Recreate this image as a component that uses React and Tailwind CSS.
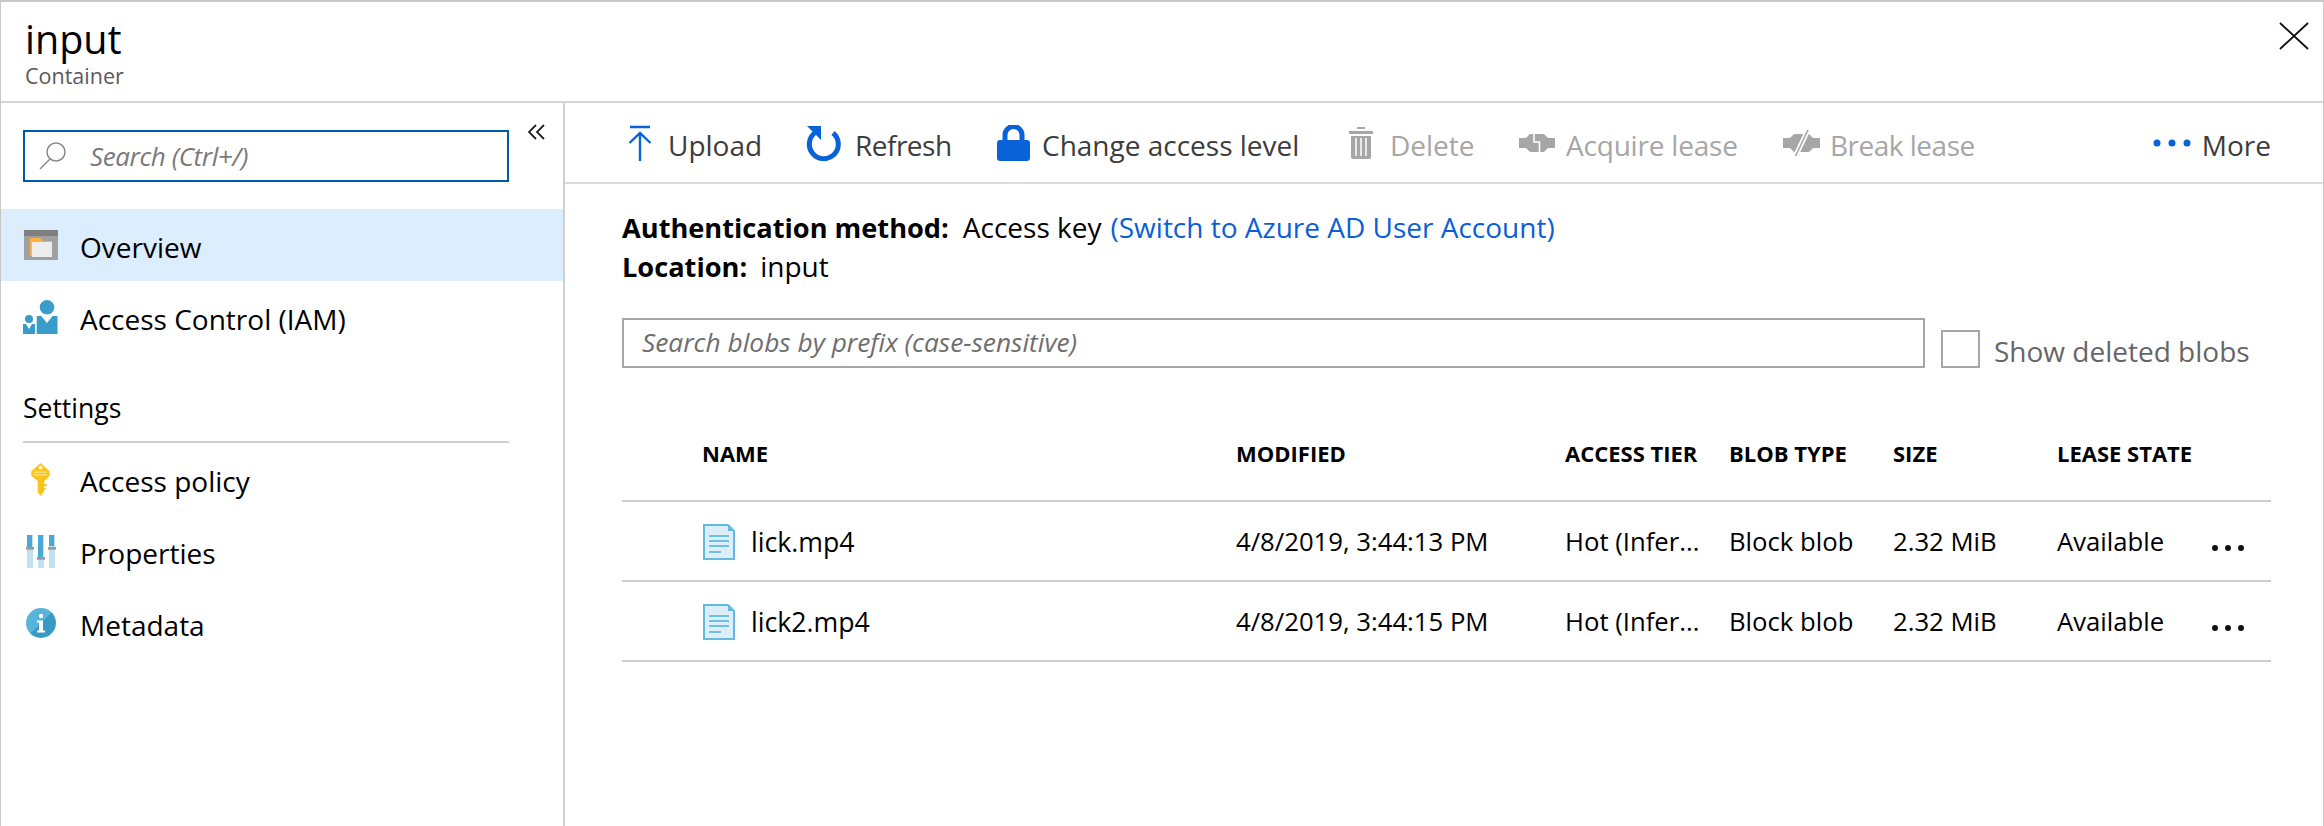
import React from 'react';

const FONT = "font-['Open_Sans',sans-serif]";

const UploadIcon = () => (
  <svg width="24" height="36" viewBox="0 0 24 36" fill="none" stroke="#0a62d8" strokeWidth="2.4">
    <path d="M2 2h20M12 36V8M1.500 18L12 8l10.500 10" />
  </svg>
);
const RefreshIcon = () => (
  <svg width="36" height="36" viewBox="0 0 36 36" fill="none">
    <path d="M27 8a14.500 14.500 0 1 1-17-1" stroke="#0a62d8" strokeWidth="5" />
    <path d="M1 1h14v14z" fill="#0a62d8" />
  </svg>
);
const LockIcon = () => (
  <svg width="33" height="36" viewBox="0 0 33 36" fill="none">
    <path d="M8 17V10a8.500 8.500 0 0 1 17 0v7" stroke="#0a62d8" strokeWidth="5" />
    <rect x="0" y="15" width="33" height="21" rx="3" fill="#0a62d8" />
  </svg>
);
const TrashIcon = () => (
  <svg width="24" height="32" viewBox="0 0 24 32" fill="#a6a6a6">
    <rect x="8" y="0" width="8" height="2" />
    <rect x="0" y="4" width="24" height="3" />
    <path d="M2 9h20v21a2 2 0 0 1-2 2H4a2 2 0 0 1-2-2z" />
    <path d="M7 11v18M12 11v18M17 11v18" stroke="#fff" strokeWidth="1.500" />
  </svg>
);
const AcquireIcon = () => (
  <svg width="36" height="18" viewBox="0 0 36 18">
    <path d="M0 4h7l4-4h14l4 4h7v10h-7l-4 4H11l-4-4H0z" fill="#a6a6a6" />
    <path d="M15 0v8h5.500v10" fill="none" stroke="#fff" strokeWidth="1.600" />
  </svg>
);
const BreakIcon = () => (
  <svg width="37" height="26" viewBox="0 0 37 26">
    <path d="M0 8h7l4-4h15l4 4h7v10h-7l-4 4H11l-4-4H0z" fill="#a6a6a6" />
    <path d="M25 0L12.500 26" stroke="#fff" strokeWidth="5" />
    <path d="M25 0L12.500 26" stroke="#a6a6a6" strokeWidth="1.600" />
  </svg>
);
const DotsIcon = () => (
  <svg width="38" height="10" viewBox="0 0 38 10" fill="#0a62d8">
    <circle cx="4" cy="5" r="3.500" /><circle cx="19" cy="5" r="3.500" /><circle cx="34" cy="5" r="3.500" />
  </svg>
);
const OverviewIcon = () => (
  <svg width="34" height="30" viewBox="0 0 34 30">
    <rect width="34" height="30" rx="1" fill="#a0a0a0" />
    <rect width="34" height="6" fill="#7f7f7f" />
    <path d="M6 8h10l3 3h9v15H6z" fill="#ffb33e" />
    <rect x="8" y="12" width="20" height="15" fill="#ececec" />
  </svg>
);
const IamIcon = () => (
  <svg width="35" height="34" viewBox="0 0 35 34" fill="#3a9ccb">
    <circle cx="24" cy="7.300" r="7.300" />
    <path d="M13.700 16h4.500l5.800 7 5.500-7h5v18H13.700z" />
    <circle cx="6" cy="19" r="4" />
    <path d="M0 24h3l3 5 3-5h3v10H0z" />
  </svg>
);
const KeyIcon = () => (
  <svg width="21" height="33" viewBox="0 0 22 36">
    <path d="M11 0l10 9v5l-6 6v11l-4 5-3-4V20L1 14V9z" fill="#fcc419" />
    <circle cx="11" cy="5" r="2" fill="#fff" />
    <path d="M4 10h14M4 13h14" stroke="#ffe28a" strokeWidth="1.500" />
    <path d="M15 24h3M15 28h2" stroke="#fcc419" strokeWidth="2" />
  </svg>
);
const PropertiesIcon = () => (
  <svg width="30" height="33" viewBox="0 0 30 36" preserveAspectRatio="none">
    <rect x="1" y="0" width="6" height="36" fill="#bfe1f0" />
    <rect x="12" y="0" width="6" height="36" fill="#bfe1f0" />
    <rect x="23" y="0" width="6" height="36" fill="#bfe1f0" />
    <rect x="1" y="0" width="5" height="14" fill="#4aa8d8" />
    <rect x="12" y="0" width="5" height="24" fill="#4aa8d8" />
    <rect x="23" y="0" width="5" height="12" fill="#4aa8d8" />
    <rect x="0" y="13" width="8" height="3" fill="#9a9a9a" />
    <rect x="11" y="24" width="8" height="3" fill="#9a9a9a" />
    <rect x="22" y="13" width="8" height="3" fill="#9a9a9a" />
  </svg>
);
const InfoIcon = () => (
  <svg width="30" height="30" viewBox="0 0 30 30">
    <circle cx="15" cy="15" r="15" fill="#59b4d9" />
    <path d="M25.600 4.400A15 15 0 0 1 4.400 25.600z" fill="#3999c6" />
    <circle cx="15" cy="8" r="2.200" fill="#fff" />
    <path d="M11 12.500h6v10h2v2h-8v-2h2v-8h-2z" fill="#fff" />
  </svg>
);
const FileIcon = () => (
  <svg width="32" height="36" viewBox="0 0 32 36">
    <path d="M1 1h24l6 6v28H1z" fill="#deeef8" stroke="#62bade" strokeWidth="2" />
    <path d="M25 1v6h6z" fill="#62bade" />
    <path d="M6 12h20M6 17h20M6 22h20M6 28h12" stroke="#6cc0e2" strokeWidth="2" />
  </svg>
);

const toolbar = [
  { label: 'Upload', icon: <UploadIcon />, box: 'w-[178px]', iconBox: 'w-[40px]', text: 'text-[#3c3c3c]' },
  { label: 'Refresh', icon: <RefreshIcon />, box: 'w-[191px]', iconBox: 'w-[49px]', text: 'text-[#3c3c3c] tracking-[-0.5px]' },
  { label: 'Change access level', icon: <LockIcon />, box: 'w-[352px]', iconBox: 'w-[45px]', text: 'text-[#3c3c3c]' },
  { label: 'Delete', icon: <TrashIcon />, box: 'w-[170px]', iconBox: 'w-[41px]', text: 'text-[#a6a6a6]' },
  { label: 'Acquire lease', icon: <AcquireIcon />, box: 'w-[264px]', iconBox: 'w-[47px]', text: 'text-[#a6a6a6] tracking-[-0.2px]' },
  { label: 'Break lease', icon: <BreakIcon />, box: 'w-[300px]', iconBox: 'w-[47px]', text: 'text-[#a6a6a6] tracking-[-0.5px]' },
];

const settings = [
  { label: 'Access policy', icon: <KeyIcon /> },
  { label: 'Properties', icon: <PropertiesIcon /> },
  { label: 'Metadata', icon: <InfoIcon /> },
];

const blobs = [
  { name: 'lick.mp4', modified: '4/8/2019, 3:44:13 PM' },
  { name: 'lick2.mp4', modified: '4/8/2019, 3:44:15 PM' },
];

const GRID = 'grid grid-cols-[614px_329px_164px_164px_164px_154px_59px] items-center';

const NavItem = ({ icon, label, active }) => (
  <div className={`flex items-center h-[72px] pl-[22px] text-[28px] text-black ${active ? 'bg-[#dcedfd]' : ''}`}>
    <span className="w-[57px] flex justify-center pr-[22px]">{icon}</span>
    <span className="pt-[3px]">{label}</span>
  </div>
);

export default function App() {
  return (
    <div className={`w-[2324px] h-[826px] bg-white flex flex-col border-t-2 border-l border-r border-[#c8c8c8] ${FONT}`}>
      <header className="h-[101px] shrink-0 border-b-2 border-[#d6d6d6] pl-[24px] pr-[14px] flex justify-between items-start">
        <div>
          <h1 className="text-[39.5px] leading-[48px] mt-[13px] text-black font-normal">input</h1>
          <div className="text-[21.5px] leading-[26px] text-[#5a5a5a]">Container</div>
        </div>
        <svg width="30" height="28" viewBox="0 0 30 28" fill="none" stroke="#111" strokeWidth="1.800" className="mt-[20px]">
          <path d="M1 1l28 26M29 1L1 27" />
        </svg>
      </header>

      <div className="flex flex-1 min-h-0">
        <aside className="w-[564px] shrink-0 border-r-2 border-[#d0d0d0] flex flex-col">
          <div className="flex items-start pl-[22px] pt-[27px] h-[106px]">
            <div className="w-[486px] h-[52px] border-2 border-[#0058a8] flex items-center pl-[14px]">
              <svg width="28" height="30" viewBox="0 0 28 30" fill="none" stroke="#8a8a8a" strokeWidth="1.500">
                <circle cx="17" cy="11" r="9" /><path d="M11 18L1 28" />
              </svg>
              <span className="ml-[23px] text-[26px] italic text-[#7a7a7a] tracking-[-0.4px]">Search (Ctrl+/)</span>
            </div>
            <svg width="18" height="16" viewBox="0 0 18 16" fill="none" stroke="#222" strokeWidth="1.800" className="ml-[18px] mt-[-6px]">
              <path d="M9 1L2 8l7 7M17 1l-7 7 7 7" />
            </svg>
          </div>
          <NavItem icon={<OverviewIcon />} label="Overview" active />
          <NavItem icon={<IamIcon />} label="Access Control (IAM)" />
          <div className="ml-[22px] w-[486px] mt-[37px] pb-[15px] border-b-2 border-[#d0d0d0] text-[26.5px] font-medium text-black leading-[36px]">Settings</div>
          <div>
            {settings.map((s) => <NavItem key={s.label} icon={s.icon} label={s.label} />)}
          </div>
        </aside>

        <main className="flex-1 min-w-0 flex flex-col">
          <div className="h-[81px] shrink-0 border-b-2 border-[#dcdcdc] flex items-center pl-[63px] pr-[52px] text-[28px]">
            {toolbar.map((t) => (
              <div key={t.label} className={`flex items-center ${t.box}`}>
                <span className={`flex items-center ${t.iconBox}`}>{t.icon}</span>
                <span className={`pt-[4px] ${t.text}`}>{t.label}</span>
              </div>
            ))}
            <div className="ml-auto flex items-center">
              <span className="w-[49px] flex items-center"><DotsIcon /></span>
              <span className="pt-[4px] text-[#3c3c3c]">More</span>
            </div>
          </div>

          <div className="pl-[57px] pr-[52px] flex-1">
            <div className="mt-[24px] text-[28px] leading-[39px] text-black">
              <div>
                <span className="text-[27.2px] font-bold mr-[14px]">Authentication method:</span>
                <span>Access key</span>
                <span className="ml-[9px] text-[#0b5fd6]">(Switch to Azure AD User Account)</span>
              </div>
              <div>
                <span className="text-[27.2px] font-bold mr-[13px]">Location:</span>
                <span>input</span>
              </div>
            </div>

            <div className="flex items-center mt-[32px] h-[50px]">
              <div className="w-[1303px] h-[50px] border-2 border-[#a6a6a6] flex items-center pl-[18px] text-[26.3px] italic text-[#6e6e6e]">
                Search blobs by prefix (case-sensitive)
              </div>
              <div className="w-[39px] h-[38px] border-2 border-[#a6a6a6] ml-[16px] mt-[12px]" />
              <span className="ml-[14px] mt-[16px] text-[28px] text-[#666]">Show deleted blobs</span>
            </div>

            <div className={`${GRID} h-[134px] border-b-2 border-[#cccccc] pt-[38px] text-[22px] font-bold text-black`}>
              <span className="pl-[80px]">NAME</span>
              <span>MODIFIED</span>
              <span>ACCESS TIER</span>
              <span>BLOB TYPE</span>
              <span>SIZE</span>
              <span>LEASE STATE</span>
              <span />
            </div>

            {blobs.map((b) => (
              <div key={b.name} className={`${GRID} h-[80px] border-b-2 border-[#cccccc] pt-[2px] text-[25.7px] text-black`}>
                <span className="pl-[81px] flex items-center gap-[16px] text-[26.7px]"><FileIcon />{b.name}</span>
                <span>{b.modified}</span>
                <span className="truncate pr-[12px]">Hot (Infer...</span>
                <span>Block blob</span>
                <span>2.32 MiB</span>
                <span>Available</span>
                <svg width="34" height="8" viewBox="0 0 34 8" fill="#111" className="mt-[12px]">
                  <circle cx="4" cy="4" r="3" /><circle cx="17" cy="4" r="3" /><circle cx="30" cy="4" r="3" />
                </svg>
              </div>
            ))}
          </div>
        </main>
      </div>
    </div>
  );
}
